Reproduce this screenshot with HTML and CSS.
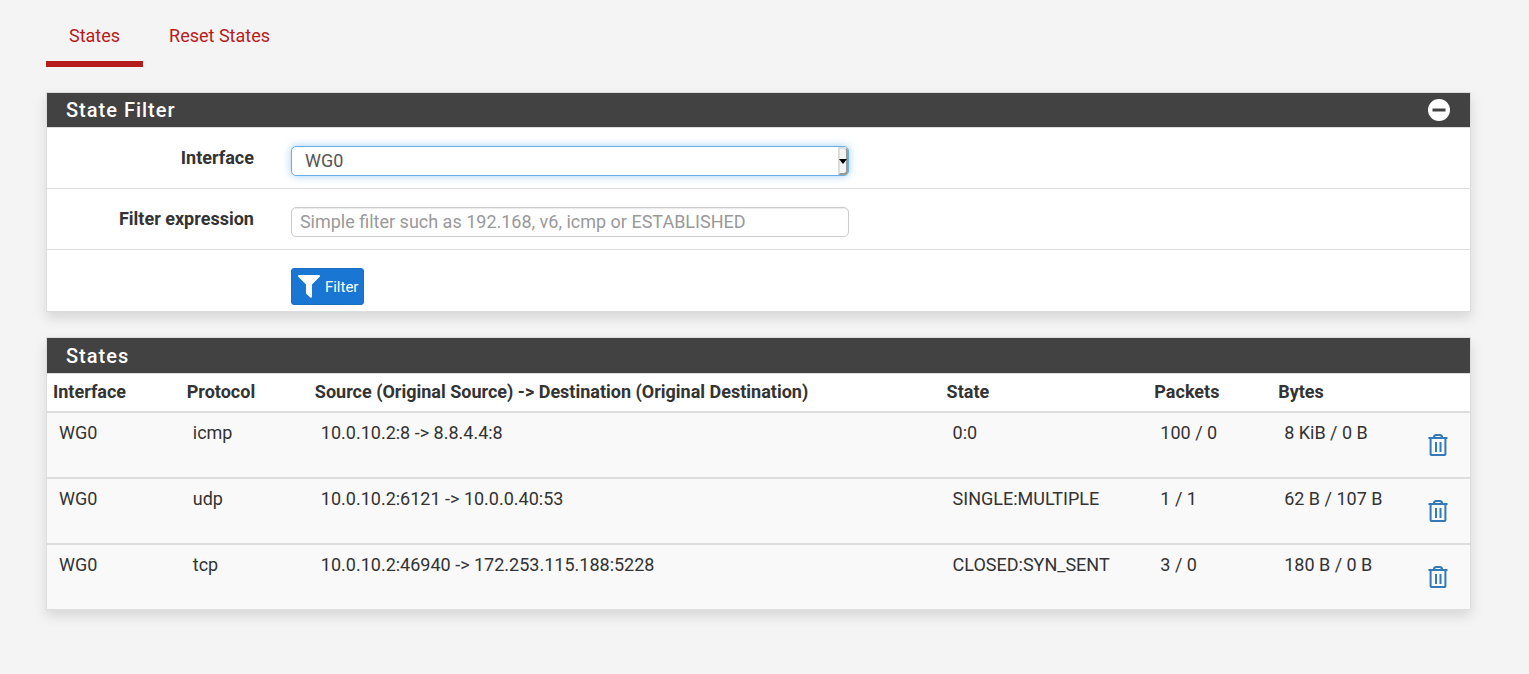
FILE: index.html
```html
<!DOCTYPE html>
<html lang="en">
<head>
<meta charset="utf-8">
<title>States</title>
<link rel="stylesheet" href="styles.css">
</head>
<body>
<svg class="sprite" aria-hidden="true">
  <symbol id="trash" viewBox="0 0 20 24">
    <path d="M.5 5h19M2.600 5.500v15.800q0 .7.7.7h13.400q.7 0 .7-.7V5.500M5.800 4.500C6 2.600 7 2 8.400 2h3.200c1.400 0 2.400.6 2.600 2.500M8 9v10M12.500 9v10" fill="none" stroke="currentColor" stroke-width="2"/>
  </symbol>
</svg>
<main class="page">
  <nav class="tabs">
    <a class="tab tab-active" href="#states">States</a>
    <a class="tab" href="#reset">Reset States</a>
  </nav>

  <section class="panel">
    <header class="panel-head">
      <h2 class="panel-title">State Filter</h2>
      <button class="collapse" type="button" aria-label="Collapse">
        <svg class="collapse-icon" viewBox="0 0 22 22"><circle cx="11" cy="11" r="11" fill="#fff"/><path d="M4.500 9.500h13v3h-13z" fill="#424242"/></svg>
      </button>
    </header>
    <form class="filter-form">
      <div class="row">
        <label class="label" for="interface">Interface</label>
        <div class="field">
          <div class="select-wrap">
            <select class="control select" id="interface"><option>WG0</option></select>
            <span class="stepper"></span>
          </div>
        </div>
      </div>
      <div class="row">
        <label class="label" for="expression">Filter expression</label>
        <div class="field">
          <input class="control" id="expression" type="text" placeholder="Simple filter such as 192.168, v6, icmp or ESTABLISHED">
        </div>
      </div>
      <div class="row">
        <div class="label"></div>
        <div class="field">
          <button class="filter-button" type="button">
            <svg class="funnel" viewBox="0 0 22 23"><path d="M.8 0h20.400q1.200.6.500 1.800L14 9.500v12.300q-.5 1.300-1.700.7L8.400 19q-.4-.5-.4-1.200V9.500L.3 1.800Q-.4.6.8 0z" fill="currentColor"/></svg>
            Filter
          </button>
        </div>
      </div>
    </form>
  </section>

  <section class="panel">
    <header class="panel-head panel-head-tall">
      <h2 class="panel-title">States</h2>
    </header>
    <table class="states">
      <colgroup>
        <col class="col-interface"><col class="col-protocol"><col class="col-route"><col class="col-state"><col class="col-packets"><col class="col-bytes"><col>
      </colgroup>
      <thead>
        <tr><th>Interface</th><th>Protocol</th><th>Source (Original Source) -&gt; Destination (Original Destination)</th><th>State</th><th>Packets</th><th>Bytes</th><th></th></tr>
      </thead>
      <tbody>
        <tr><td>WG0</td><td>icmp</td><td>10.0.10.2:8 -&gt; 8.8.4.4:8</td><td>0:0</td><td>100 / 0</td><td>8 KiB / 0 B</td><td class="actions"><a class="delete" href="#delete-1" aria-label="Delete state"><svg class="trash"><use href="#trash"/></svg></a></td></tr>
        <tr><td>WG0</td><td>udp</td><td>10.0.10.2:6121 -&gt; 10.0.0.40:53</td><td>SINGLE:MULTIPLE</td><td>1 / 1</td><td>62 B / 107 B</td><td class="actions"><a class="delete" href="#delete-2" aria-label="Delete state"><svg class="trash"><use href="#trash"/></svg></a></td></tr>
        <tr><td>WG0</td><td>tcp</td><td>10.0.10.2:46940 -&gt; 172.253.115.188:5228</td><td>CLOSED:SYN_SENT</td><td>3 / 0</td><td>180 B / 0 B</td><td class="actions"><a class="delete" href="#delete-3" aria-label="Delete state"><svg class="trash"><use href="#trash"/></svg></a></td></tr>
      </tbody>
    </table>
  </section>
</main>
</body>
</html>
```
FILE: styles.css
```css
* { box-sizing: border-box; }

body {
  margin: 0;
  background: #f4f4f4;
  color: #333;
  font: 18px/26px Roboto, sans-serif;
}

.sprite { position: absolute; width: 0; height: 0; }

.page { padding: 10px 58px 24px 46px; }

.tabs { display: flex; gap: 3px; margin-bottom: 25px; }

.tab {
  padding: 13px 23px 12px;
  border-bottom: 6px solid transparent;
  color: #b71c1c;
  text-decoration: none;
}

.tab-active { border-bottom-color: #b71c1c; }

.panel {
  margin-bottom: 25px;
  border: 1px solid #ddd;
  background: #fff;
  box-shadow: 0 6px 12px rgba(0, 0, 0, .12);
}

.panel-head {
  display: flex;
  align-items: center;
  justify-content: space-between;
  height: 35px;
  padding: 0 20px 0 19px;
  border-bottom: 1px solid #ddd;
  background: #424242;
}

.panel-head-tall { height: 36px; }

.panel-title {
  margin: 0;
  color: #fff;
  font-size: 20px;
  font-weight: 500;
  line-height: 24px;
  letter-spacing: 1px;
}

.collapse {
  display: flex;
  padding: 0;
  border: 0;
  background: none;
}

.collapse-icon { width: 22px; height: 22px; }

.row {
  display: flex;
  padding: 18px 0 12px;
  border-bottom: 1px solid #ddd;
}

.row:last-child { padding-bottom: 6px; border-bottom: 0; }

.label {
  width: 17%;
  padding-right: 35px;
  font-weight: 700;
  line-height: 24px;
  text-align: right;
}

.field { width: 83%; padding-left: 2px; }

.control {
  display: block;
  width: 47.3%;
  height: 30px;
  padding: 0 8px 2px;
  border: 1px solid #ccc;
  border-radius: 5px;
  background: #fff;
  box-shadow: inset 0 1px 1px rgba(0, 0, 0, .08);
  color: #555;
  font: 18px/26px Roboto, sans-serif;
}

.control::placeholder { color: #999; opacity: 1; }

.select-wrap { position: relative; width: 47.3%; }

.select {
  width: 100%;
  padding: 0 13px;
  border-color: #66afe9;
  outline: 0;
  appearance: none;
  box-shadow: 0 0 8px rgba(102, 175, 233, .6);
}

.stepper {
  position: absolute;
  top: 1px;
  right: 1px;
  bottom: 1px;
  display: flex;
  align-items: center;
  justify-content: center;
  width: 10px;
  border: 2px solid;
  border-color: #ddd #999 #999 #ddd;
  border-radius: 0 4px 4px 0;
  background: #f4f4f2;
  pointer-events: none;
}

.stepper::before {
  content: "";
  flex: none;
  border: 4px solid transparent;
  border-top: 5px solid #000;
  border-bottom: 0;
}

.filter-button {
  display: flex;
  align-items: center;
  gap: 5px;
  height: 37px;
  padding: 0 5px 0 6px;
  border: 1px solid #1b6ec2;
  border-radius: 3px;
  background: #1976d2;
  color: #fff;
  font: 15px/22px Roboto, sans-serif;
}

.funnel { width: 22px; height: 23px; }

.states {
  width: 100%;
  border-collapse: separate;
  border-spacing: 0;
  table-layout: fixed;
}

.col-interface { width: 9.4%; }
.col-protocol { width: 9%; }
.col-route { width: 44.4%; }
.col-state { width: 14.6%; }
.col-packets { width: 8.7%; }
.col-bytes { width: 10.1%; }

.states th {
  height: 37px;
  padding: 5px 6px 6px;
  font-weight: 700;
  text-align: left;
}

.states td {
  height: 66px;
  padding: 7px 12px;
  border-top: 2px solid #ddd;
  background: #f9f9f9;
  vertical-align: top;
}

.states .actions { padding-top: 20px; }

.delete { display: flex; color: #337ab7; }

.trash { width: 20px; height: 24px; }
```
